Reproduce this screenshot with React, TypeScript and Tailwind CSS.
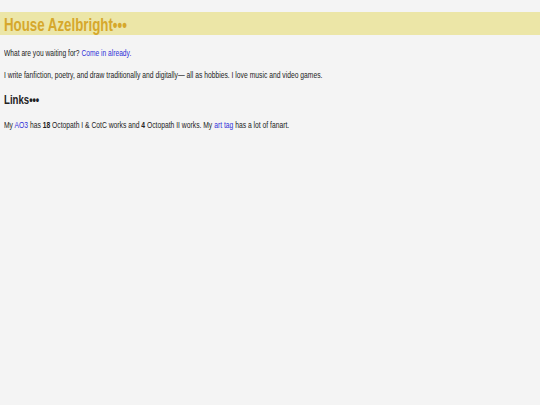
export default function App() {
  const font = { fontFamily: '"Liberation Sans Narrow", "Liberation Sans", Arial, sans-serif' };
  return (
    <div className="min-h-[405px] w-full bg-[#f4f4f4] text-[#222222] pt-[12px]" style={font}>
      <div className="h-[23px] bg-[#ece6a7] px-[4px] flex items-center">
        <h1 className="text-[19px] leading-[23px] font-bold text-[#d6a82c] pt-[2px] origin-left scale-x-[0.7] whitespace-nowrap">
          House Azelbright•••
        </h1>
      </div>
      <div className="px-[4px]">
        <p className="mt-[12px] text-[9px] leading-[12px] origin-left scale-x-[0.74] whitespace-nowrap">
          What are you waiting for? <a className="text-[#2f2fd8]">Come in already.</a>
        </p>
        <p className="mt-[10px] text-[9px] leading-[12px] origin-left scale-x-[0.75] whitespace-nowrap">
          I write fanfiction, poetry, and draw traditionally and digitally— all as hobbies. I love music and video games.
        </p>
        <h2 className="mt-[11px] text-[13px] leading-[16px] font-bold origin-left scale-x-[0.74] whitespace-nowrap">
          Links•••
        </h2>
        <p className="mt-[11px] text-[9px] leading-[12px] origin-left scale-x-[0.75] whitespace-nowrap">
          My <a className="text-[#2f2fd8]">AO3</a> has <b>18</b> Octopath I &amp; CotC works and <b>4</b> Octopath II works. My{" "}
          <a className="text-[#2f2fd8]">art tag</a> has a lot of fanart.
        </p>
      </div>
    </div>
  );
}
